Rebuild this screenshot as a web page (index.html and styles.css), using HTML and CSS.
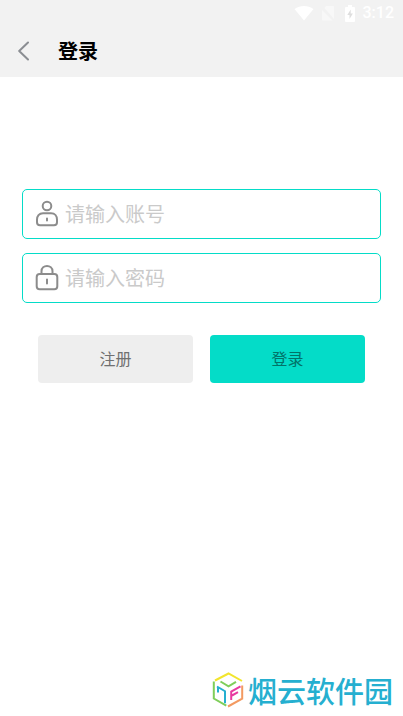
FILE: index.html
```html
<!DOCTYPE html>
<html lang="zh-CN">
<head>
<meta charset="utf-8">
<meta name="viewport" content="width=device-width, initial-scale=1">
<title>登录</title>
<link rel="stylesheet" href="styles.css">
</head>
<body>
<header class="top">
  <div class="status">
    <svg width="20" height="16" viewBox="0 0 20 16" fill="#fff" aria-hidden="true"><path d="M.5 4C6 .1 14 .1 19.500 4L10 15.500z"/></svg>
    <svg class="sim" width="14" height="16" viewBox="0 0 14 16" aria-hidden="true"><path fill="#f8f8f8" d="M5 1h7q1 0 1 1v12L3.500 3zM1 5l10.500 10.500H2q-1 0-1-1z"/></svg>
    <svg class="battery" width="12" height="17" viewBox="0 0 12 17" aria-hidden="true"><path fill="#fff" d="M4 0h4v2h2q1 0 1 1v13q0 1-1 1H2q-1 0-1-1V3q0-1 1-1h2z"/><path fill="#dedede" d="M6.700 4.500L3.300 10h2.200v4L8.900 8.500H6.700z"/></svg>
    <span class="time">3:12</span>
  </div>
  <div class="bar">
    <a class="back" href="#" aria-label="返回"><svg width="12" height="20" viewBox="0 0 12 20" fill="none" stroke="#8b8e93" stroke-width="2" stroke-linecap="round" stroke-linejoin="round"><path d="M10 1.500L1.200 10l8.800 8.500"/></svg></a>
    <h1 class="title">登录</h1>
  </div>
</header>
<main class="content">
  <form class="form">
    <label class="field">
      <svg class="icon" width="24" height="28" viewBox="0 0 24 28" fill="none" stroke="#8c8c8c" stroke-width="2" stroke-linecap="round" aria-hidden="true"><circle cx="12" cy="6" r="4.300"/><path d="M8 13.200h8c4 0 6 3 6 6.300v2.700q0 3-3 3H5q-3 0-3-3v-2.700c0-3.300 2-6.300 6-6.300zM12 18.500v2"/></svg>
      <input class="input" type="text" placeholder="请输入账号" aria-label="账号">
    </label>
    <label class="field">
      <svg class="icon" width="24" height="28" viewBox="0 0 24 28" fill="none" stroke="#8c8c8c" stroke-width="2" stroke-linecap="round" aria-hidden="true"><rect x="1.700" y="10" width="20.600" height="15.200" rx="3"/><path d="M6.500 10V7.200c0-7 11-7 11 0V10M12 15.500v4"/></svg>
      <input class="input" type="password" placeholder="请输入密码" aria-label="密码">
    </label>
    <div class="actions">
      <button class="button" type="button">注册</button>
      <button class="button primary" type="submit">登录</button>
    </div>
  </form>
</main>
<footer class="brand">
  <svg width="32" height="36" viewBox="0 0 32 36" fill="none" stroke-width="2" aria-hidden="true">
    <path stroke="#f2e52e" d="M3 8.500L16.500 1.500 30 9"/>
    <path stroke="#7fce5a" d="M8.500 9.500l8 4.800 7.500-4.500M1.800 9.500v17l12.500 7.200"/>
    <path stroke="#25afd0" d="M5 14.500l8 4.700v12M6 15v5.500"/>
    <path stroke="#e83aa0" d="M28.500 14.300l-9.300 5.400V28M20 23.500l6-3.300"/>
    <path stroke="#f39a61" d="M30.200 13.500v13.200L16 34.500"/>
  </svg>
  <span class="name">烟云软件园</span>
</footer>
</body>
</html>
```
FILE: styles.css
```css
* {
  box-sizing: border-box;
}

body {
  margin: 0;
  min-height: 100vh;
  display: flex;
  flex-direction: column;
  background: #fff;
  font-family: "Noto Sans CJK SC", sans-serif;
}

.top {
  background: #f2f2f2;
}

.status {
  display: flex;
  align-items: center;
  justify-content: flex-end;
  height: 26px;
  padding: 0 9px;
  color: #fff;
}

.sim {
  margin-left: 7px;
}

.battery {
  margin: 0 7px 0 9px;
}

.time {
  font: 500 16px/28px Roboto, sans-serif;
}

.bar {
  display: flex;
  align-items: center;
  height: 51px;
  padding: 0 18px 2px;
  gap: 28px;
}

.back {
  display: flex;
}

.title {
  margin: 0;
  font-size: 20px;
  line-height: 30px;
  font-weight: 700;
  color: #000;
}

.content {
  flex: 1;
  padding: 112px 22px 0;
}

.form {
  display: flex;
  flex-direction: column;
  gap: 14px;
}

.field {
  display: flex;
  align-items: center;
  gap: 6px;
  height: 50px;
  padding: 0 12px;
  border: 1px solid #04dcc8;
  border-radius: 5px;
}

.icon {
  flex: none;
}

.input {
  flex: 1;
  min-width: 0;
  padding: 0;
  border: 0;
  outline: 0;
  background: none;
  font: 20px/30px "Noto Sans CJK SC", sans-serif;
  color: #333;
}

.input::placeholder {
  color: #cacaca;
  opacity: 1;
}

.actions {
  display: flex;
  gap: 17px;
  padding: 18px 16px 0;
}

.button {
  flex: 1;
  height: 48px;
  padding: 0 0 2px;
  border: 0;
  border-radius: 4px;
  background: #eee;
  font: 16px/24px "Noto Sans CJK SC", sans-serif;
  color: #707070;
}

.primary {
  background: #04dcc8;
  color: #027368;
}

.brand {
  display: flex;
  align-items: center;
  justify-content: flex-end;
  gap: 4px;
  padding: 0 10px 8px;
}

.name {
  font-size: 29px;
  line-height: 36px;
  font-weight: 500;
  color: #25afd0;
}
```
